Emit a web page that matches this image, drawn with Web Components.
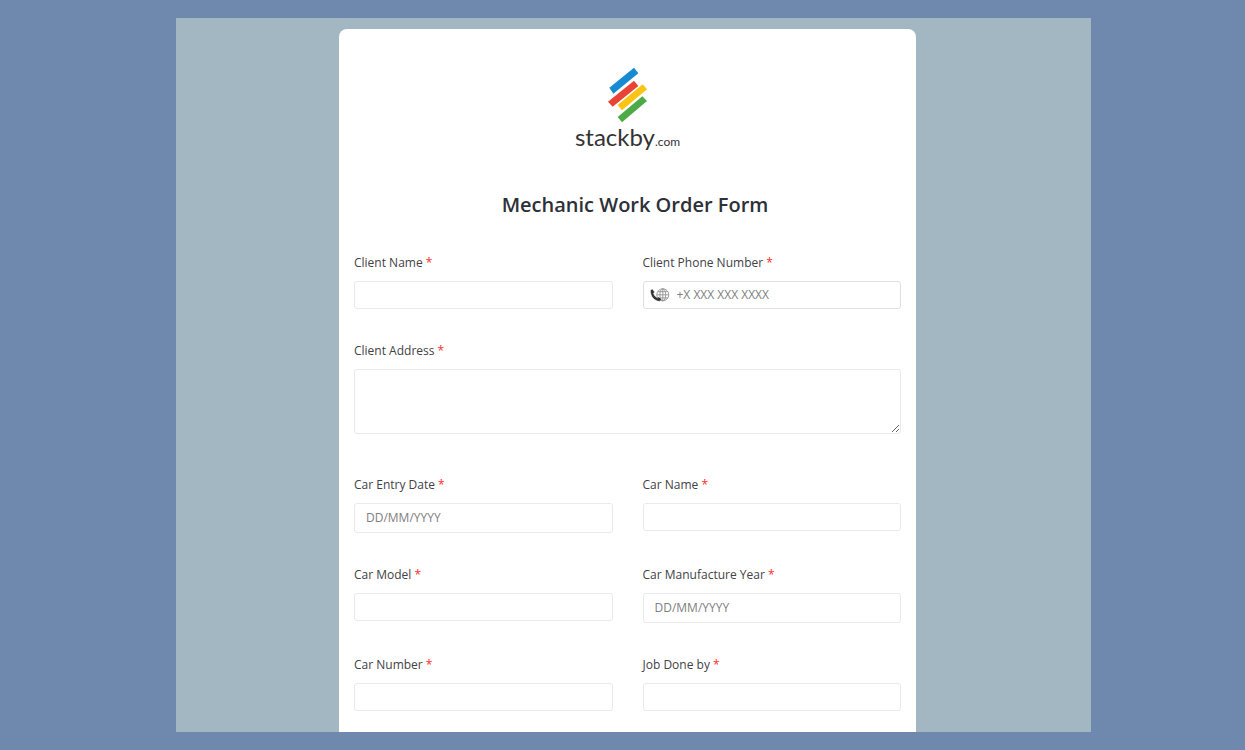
<!DOCTYPE html>
<html lang="en">
<head>
<meta charset="utf-8">
<meta name="viewport" content="width=device-width, initial-scale=1">
<title>Mechanic Work Order Form</title>
<style>
  body {
    margin: 0;
    background: #6f89ae;
    color: #3f4246;
    font: 12px/16px "Open Sans", "Noto Sans", sans-serif;
  }
</style>
</head>
<body>
<form-page>
  <form-card>
    <brand-logo slot="logo"></brand-logo>
    <span slot="title">Mechanic Work Order Form</span>
    <form-field label="Client Name"></form-field>
    <form-field label="Client Phone Number" kind="phone" placeholder="+X XXX XXX XXXX"></form-field>
    <form-field label="Client Address" kind="area"></form-field>
    <form-field label="Car Entry Date" kind="date" placeholder="DD/MM/YYYY"></form-field>
    <form-field label="Car Name"></form-field>
    <form-field label="Car Model"></form-field>
    <form-field label="Car Manufacture Year" kind="date" placeholder="DD/MM/YYYY"></form-field>
    <form-field label="Car Number"></form-field>
    <form-field label="Job Done by"></form-field>
  </form-card>
</form-page>

<script>
class FormPage extends HTMLElement {
  constructor() {
    super();
    this.attachShadow({ mode: "open" }).innerHTML = `
      <style>
        :host { display: flex; box-sizing: border-box; min-height: 100vh; padding: 18px 154px 18px 176px; }
        main { flex: 1; min-width: 0; display: flex; justify-content: center; padding: 11px 12px 0 0; background: #a2b7c1; }
        @media (max-width: 900px) { :host { padding: 18px; } main { padding: 11px 12px 0; } }
      </style>
      <main><slot></slot></main>`;
  }
}

class FormCard extends HTMLElement {
  constructor() {
    super();
    this.attachShadow({ mode: "open" }).innerHTML = `
      <style>
        :host { display: block; box-sizing: border-box; width: 100%; max-width: 577px; padding: 38px 15px 21px; background: #fff; border-radius: 8px 8px 0 0; }
        h1 { margin: 33px 0 34px; padding-left: 15px; text-align: center; font-size: 20px; line-height: 32px; font-weight: 600; color: #2e3038; }
        form { display: grid; grid-template-columns: 1fr 1fr; gap: 34px 30px; align-items: start; }
      </style>
      <slot name="logo"></slot>
      <h1><slot name="title"></slot></h1>
      <form><slot></slot></form>`;
  }
}

class BrandLogo extends HTMLElement {
  constructor() {
    super();
    this.attachShadow({ mode: "open" }).innerHTML = `
      <style>
        :host { display: flex; flex-direction: column; align-items: center; color: #333; font-family: Lato, sans-serif; }
        svg { display: block; width: 40px; height: 56px; }
        p { margin: 0; font-size: 24px; line-height: 28px; }
        small { font-size: 12px; }
      </style>
      <svg viewBox="144 36 120 168" aria-hidden="true">
        <path fill="#168bd1" d="M148 98 222 38 235 55 160 116z"/>
        <path fill="#e94335" d="M144 140 222 77 235 93 158 155z"/>
        <path fill="#f9c414" d="M173 150 248 88 261 103 186 166z"/>
        <path fill="#4eaa46" d="M173 186 247 124 261 138 186 202z"/>
      </svg>
      <p>stackby<small>.com</small></p>`;
  }
}

class FormField extends HTMLElement {
  connectedCallback() {
    if (this.shadowRoot) return;
    const kind = this.getAttribute("kind") || "text";
    const hint = this.getAttribute("placeholder") || "";
    const type = kind === "phone" ? "tel" : "text";
    const control = kind === "area"
      ? `<textarea id="control" required></textarea>`
      : `<input id="control" type="${type}" placeholder="${hint}" required>`;
    const icon = kind !== "phone" ? "" : `
      <svg viewBox="0 0 20 14" aria-hidden="true">
        <g fill="none" stroke="#888" stroke-width=".8">
          <circle cx="12.8" cy="6.8" r="6"/>
          <ellipse cx="12.8" cy="6.8" rx="2.9" ry="6"/>
          <path d="M12.8.8v12M6.8 6.8h12M7.8 3.7h10M7.8 9.9h10"/>
        </g>
        <path fill="#333" stroke="#fff" stroke-width=".4" d="M.5 2.3 2.3.9 4.6 4 3.5 5.2C4 7.3 5.5 9 7.5 9.8L8.8 8.9 11.6 11.3 10 13.2C5 13.6.2 8.7.5 2.3z"/>
      </svg>`;
    this.attachShadow({ mode: "open" }).innerHTML = `
      <style>
        :host { display: block; min-width: 0; }
        :host([kind="area"]) { grid-column: 1 / -1; margin-bottom: 9px; }
        label { display: block; margin-bottom: 10px; }
        label span { color: #ff2b2b; }
        div { position: relative; }
        input, textarea {
          display: block; box-sizing: border-box; width: 100%; height: 28px; margin: 0; padding: 0 11px 2px;
          border: 1px solid #e8e9eb; border-radius: 3px; background: #fff; color: inherit;
          font: 12px/16px "Open Sans", sans-serif; outline-color: #6f89ae;
        }
        ::placeholder { color: #808080; opacity: 1; }
        textarea { height: 65px; padding: 6px 11px; resize: vertical; }
        :host([kind="date"]) input { height: 30px; }
        :host([kind="phone"]) input { padding-left: 33px; border-color: #dddfe1; }
        svg { position: absolute; left: 7px; top: 7px; width: 20px; height: 14px; }
      </style>
      <label for="control">${this.getAttribute("label")} <span>*</span></label>
      <div>${control}${icon}</div>`;
  }
}

customElements.define("form-page", FormPage);
customElements.define("form-card", FormCard);
customElements.define("brand-logo", BrandLogo);
customElements.define("form-field", FormField);
</script>
</body>
</html>
